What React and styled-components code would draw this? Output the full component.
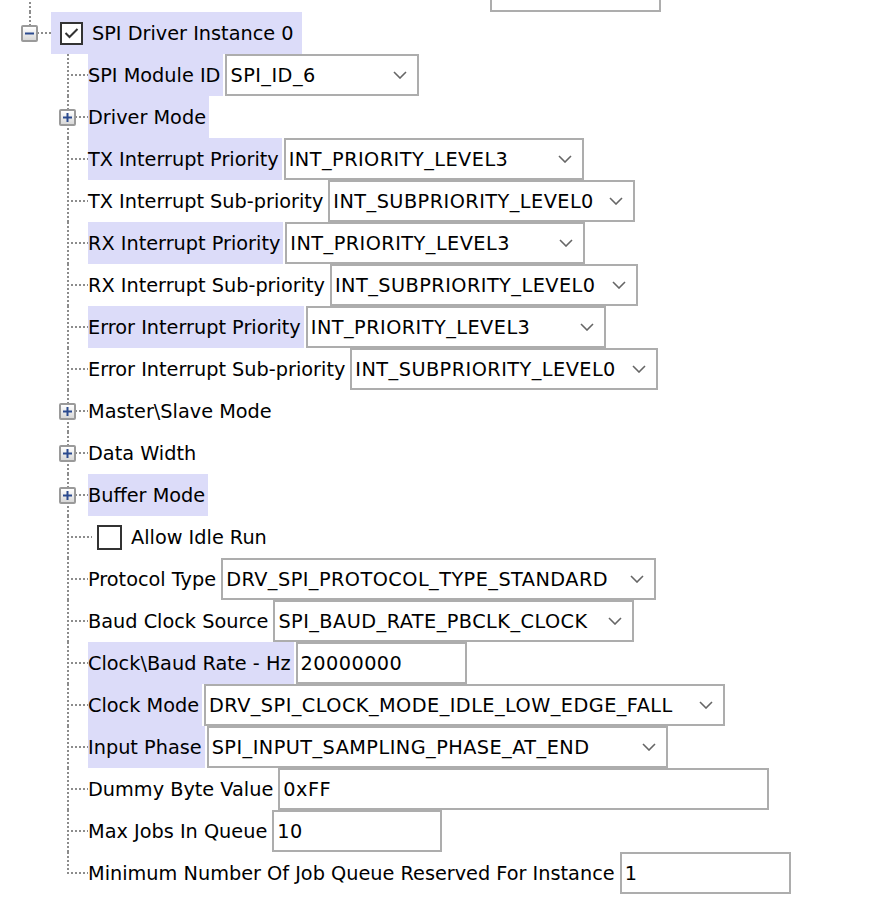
import React from "react";
import styled, { createGlobalStyle } from "styled-components";

const GlobalStyle = createGlobalStyle`
  html, body {
    margin: 0;
    padding: 0;
    background: #fff;
    overflow: hidden;
  }
  body {
    font-family: "DejaVu Sans", Verdana, sans-serif;
    font-size: 19.3px;
    color: #000;
  }
`;

const DOT = "#8c8c8c";

const Tree = styled.div`
  margin-top: -30px;
  padding-left: 21px;
`;

const Children = styled.div`
  padding-left: 38px;
`;

const Row = styled.div`
  display: flex;
  align-items: stretch;
  height: 42px;
`;

const Branch = styled.div`
  flex: 0 0 ${(p) => p.$width}px;
  display: flex;
  align-items: center;
  background-image: repeating-linear-gradient(to bottom, ${DOT} 0 2px, transparent 2px 4px),
    repeating-linear-gradient(to right, ${DOT} 0 2px, transparent 2px 4px);
  background-repeat: no-repeat;
  background-size: 2px ${(p) => (p.$last ? "21px" : "100%")},
    ${(p) => (p.$reach ? `${p.$reach}px` : "100%")} 2px;
  background-position: 8px 0, 8px 20px;
`;

const Expander = styled.span`
  box-sizing: border-box;
  width: 17px;
  height: 17px;
  border: 2px solid #9a9a9a;
  border-radius: 2px;
  background: linear-gradient(#ffffff, #d8d8d8);
  display: flex;
  align-items: center;
  justify-content: center;
`;

const Label = styled.span`
  display: flex;
  align-items: center;
  gap: 9px;
  white-space: nowrap;
  padding: 0 ${(p) => p.$padRight ?? 3}px 0 ${(p) => p.$padLeft ?? 0}px;
  min-width: ${(p) => p.$minWidth ?? 0}px;
  box-sizing: border-box;
  background: ${(p) => (p.$selected ? "#dcdcf9" : "transparent")};
`;

const Check = styled.span`
  box-sizing: border-box;
  width: ${(p) => p.$size}px;
  height: ${(p) => p.$size}px;
  border: 2px solid #333;
  background: #fff;
  display: flex;
  align-items: center;
  justify-content: center;
`;

const Field = styled.div`
  box-sizing: border-box;
  width: ${(p) => p.$width}px;
  height: 42px;
  margin-left: 2px;
  border: 2px solid #adadad;
  background: #fff;
  display: flex;
  align-items: center;
  justify-content: space-between;
  padding: 0 10px 0 3px;
  white-space: nowrap;
  letter-spacing: 0.45px;
`;

const Chevron = () => (
  <svg width="14" height="8" viewBox="0 0 14 8">
    <polyline points="1,1 7,7 13,1" fill="none" stroke="#666" strokeWidth="1.6" />
  </svg>
);

const Sign = ({ plus }) => (
  <svg width="9" height="9" viewBox="0 0 9 9">
    <line x1="0" y1="4.5" x2="9" y2="4.5" stroke="#2b4a8f" strokeWidth="2" />
    {plus && <line x1="4.5" y1="0" x2="4.5" y2="9" stroke="#2b4a8f" strokeWidth="2" />}
  </svg>
);

const items = [
  { label: "SPI Module ID", sel: true, combo: "SPI_ID_6", w: 194 },
  { label: "Driver Mode", sel: true, group: true },
  { label: "TX Interrupt Priority", sel: true, combo: "INT_PRIORITY_LEVEL3", w: 300 },
  { label: "TX Interrupt Sub-priority", combo: "INT_SUBPRIORITY_LEVEL0", w: 307 },
  { label: "RX Interrupt Priority", sel: true, combo: "INT_PRIORITY_LEVEL3", w: 300 },
  { label: "RX Interrupt Sub-priority", combo: "INT_SUBPRIORITY_LEVEL0", w: 308 },
  { label: "Error Interrupt Priority", sel: true, combo: "INT_PRIORITY_LEVEL3", w: 300 },
  { label: "Error Interrupt Sub-priority", combo: "INT_SUBPRIORITY_LEVEL0", w: 308 },
  { label: "Master\\Slave Mode", group: true },
  { label: "Data Width", group: true },
  { label: "Buffer Mode", sel: true, group: true },
  { label: "Allow Idle Run", check: true },
  { label: "Protocol Type", combo: "DRV_SPI_PROTOCOL_TYPE_STANDARD", w: 435 },
  { label: "Baud Clock Source", combo: "SPI_BAUD_RATE_PBCLK_CLOCK", w: 361 },
  { label: "Clock\\Baud Rate - Hz", sel: true, text: "20000000", w: 171 },
  { label: "Clock Mode", sel: true, combo: "DRV_SPI_CLOCK_MODE_IDLE_LOW_EDGE_FALL", w: 521 },
  { label: "Input Phase", sel: true, combo: "SPI_INPUT_SAMPLING_PHASE_AT_END", w: 461 },
  { label: "Dummy Byte Value", text: "0xFF", w: 491 },
  { label: "Max Jobs In Queue", text: "10", w: 170 },
  { label: "Minimum Number Of Job Queue Reserved For Instance", text: "1", w: 171 },
];

function Item({ item, last }) {
  if (item.check) {
    return (
      <Row>
        <Branch $width={38} $reach={25} $last={last} />
        <Label>
          <Check $size={25} />
          {item.label}
        </Label>
      </Row>
    );
  }
  return (
    <Row>
      <Branch $width={29} $last={last}>
        {item.group && (
          <Expander>
            <Sign plus />
          </Expander>
        )}
      </Branch>
      <Label $selected={item.sel}>{item.label}</Label>
      {item.combo && (
        <Field $width={item.w}>
          {item.combo}
          <Chevron />
        </Field>
      )}
      {item.text && <Field $width={item.w}>{item.text}</Field>}
    </Row>
  );
}

export default function App() {
  return (
    <>
      <GlobalStyle />
      <Tree>
        <Row>
          <Branch $width={30} />
          <Label $minWidth={437} />
          <Field $width={171} />
        </Row>
        <Row>
          <Branch $width={30} $last>
            <Expander>
              <Sign />
            </Expander>
          </Branch>
          <Label $selected $padLeft={9} $padRight={8}>
            <Check $size={23}>
              <svg width="15" height="12" viewBox="0 0 15 12">
                <polyline points="1.5,6 5.5,10 13.5,2" fill="none" stroke="#333" strokeWidth="2" />
              </svg>
            </Check>
            SPI Driver Instance 0
          </Label>
        </Row>
        <Children>
          {items.map((it, i) => (
            <Item key={it.label} item={it} last={i === items.length - 1} />
          ))}
        </Children>
      </Tree>
    </>
  );
}
